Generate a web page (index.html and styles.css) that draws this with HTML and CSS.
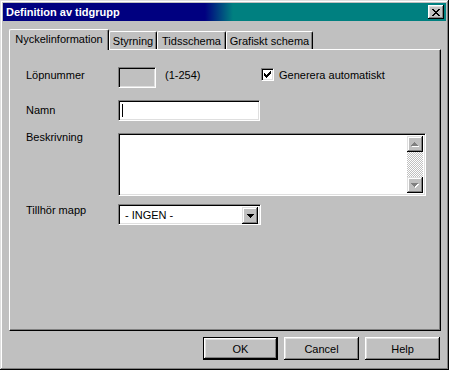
FILE: index.html
```html
<!DOCTYPE html>
<html lang="sv">
<head>
<meta charset="utf-8">
<title>Definition av tidgrupp</title>
<link rel="stylesheet" href="styles.css">
</head>
<body>
<div class="window">
  <div class="titlebar">
    <span class="title">Definition av tidgrupp</span>
    <button class="close" aria-label="Stäng">
      <svg width="8" height="7" viewBox="0 0 8 7" shape-rendering="crispEdges"><path d="M0 0h2v1h1v1h2V1h1V0h2v1h-1v1h-1v1h-1v1h1v1h1v1h1v1H6V6H5V5H3v1H2v1H0V6h1V5h1V4h1V3H2V2H1V1H0z" fill="#000"/></svg>
    </button>
  </div>
  <div class="client">
    <div class="tabs">
      <div class="tab active w1">Nyckelinformation</div>
      <div class="tab w2">Styrning</div>
      <div class="tab w3">Tidsschema</div>
      <div class="tab w4">Grafiskt schema</div>
    </div>
    <div class="panel">
      <div class="row r1">
        <span class="label">Löpnummer</span>
        <div class="field disabled f-num"></div>
        <span class="range">(1-254)</span>
        <span class="checkbox">
          <svg width="7" height="7" viewBox="0 0 7 7" shape-rendering="crispEdges"><path d="M6 0h1v1h-1z M5 1h2v1h-2z M0 2h1v1H0z M4 2h3v1H4z M0 3h2v1H0z M3 3h3v1H3z M0 4h5v1H0z M1 5h3v1H1z M2 6h1v1H2z" fill="#000"/></svg>
        </span>
        <span class="cblabel">Generera automatiskt</span>
      </div>
      <div class="row r2">
        <span class="label">Namn</span>
        <div class="field f-name"><span class="caret"></span></div>
      </div>
      <div class="row r3">
        <span class="label">Beskrivning</span>
        <div class="field f-desc">
          <div class="scrollbar">
            <div class="sbtn">
              <svg width="8" height="5" viewBox="0 0 8 5" shape-rendering="crispEdges"><path d="M4 1h1v1h1v1h1v1h1v1H1V4h1V3h1V2h1z" fill="#fff"/><path d="M3 0h1v1h1v1h1v1h1v1H0V3h1V2h1V1h1z" fill="#808080"/></svg>
            </div>
            <div class="track"></div>
            <div class="sbtn">
              <svg width="8" height="5" viewBox="0 0 8 5" shape-rendering="crispEdges"><path d="M1 1h7v1h-1v1h-1v1h-1v1H4V4H3V3H2V2H1z" fill="#fff"/><path d="M0 0h7v1h-1v1h-1v1h-1v1H3V3H2V2H1V1H0z" fill="#808080"/></svg>
            </div>
          </div>
        </div>
      </div>
      <div class="row r4">
        <span class="label">Tillhör mapp</span>
        <div class="field f-combo">
          <span class="combo-text">- INGEN -</span>
          <div class="dropbtn">
            <svg width="7" height="4" viewBox="0 0 7 4" shape-rendering="crispEdges"><path d="M0 0h7v1h-1v1h-1v1h-1v1H3V3H2V2H1V1H0z" fill="#000"/></svg>
          </div>
        </div>
      </div>
    </div>
    <div class="buttons">
      <button class="btn default">OK</button>
      <button class="btn">Cancel</button>
      <button class="btn">Help</button>
    </div>
  </div>
</div>
</body>
</html>
```

FILE: styles.css
```css
* { box-sizing: border-box; }

html, body {
  margin: 0;
  padding: 0;
  background: #c0c0c0;
}

body {
  font-family: "Liberation Sans", Arial, sans-serif;
  font-size: 11px;
  line-height: 13px;
  color: #000;
}

.window {
  width: 449px;
  height: 370px;
  padding: 3px;
  background: #c0c0c0;
  box-shadow: inset -1px -1px #000, inset 1px 1px #dfdfdf, inset -2px -2px #808080, inset 2px 2px #fff;
  display: flex;
  flex-direction: column;
}

.titlebar {
  height: 18px;
  flex: none;
  display: flex;
  align-items: center;
  justify-content: space-between;
  padding: 0 2px 0 3px;
  background: linear-gradient(to right, #000080 0, #000080 202px, #008080 230px, #008080 100%);
  color: #fff;
  font-weight: bold;
}

.close {
  width: 16px;
  height: 14px;
  padding: 0;
  margin: 0;
  border: 0;
  background: #c0c0c0;
  box-shadow: inset -1px -1px #000, inset 1px 1px #fff, inset -2px -2px #808080, inset 2px 2px #dfdfdf;
  display: flex;
  align-items: center;
  justify-content: center;
}

.client {
  flex: 1;
  display: flex;
  flex-direction: column;
  padding: 8px 5px 0 6px;
}

.tabs {
  height: 20px;
  display: flex;
  align-items: flex-end;
  position: relative;
  z-index: 1;
}

.tab {
  height: 18px;
  border-top: 1px solid #fff;
  border-left: 1px solid #fff;
  border-right: 1px solid #000;
  border-radius: 2px 2px 0 0;
  box-shadow: inset -1px 0 #808080;
  background: #c0c0c0;
  text-align: center;
  padding-top: 3px;
  white-space: nowrap;
}

.tab.active {
  height: 21px;
  margin-bottom: -1px;
  padding-top: 3px;
}

.w1 { width: 100px; }
.w2 { width: 48px; }
.w3 { width: 69px; }
.w4 { width: 87px; }

.panel {
  height: 282px;
  border-top: 1px solid #fff;
  border-left: 1px solid #fff;
  border-right: 1px solid #000;
  border-bottom: 1px solid #000;
  box-shadow: inset -1px -1px #808080;
  padding: 17px 0 0 16px;
}

.row {
  display: flex;
  align-items: flex-start;
}

.r2 { margin-top: 12px; }
.r3 { margin-top: 12px; }
.r4 { margin-top: 8px; }

.label {
  width: 92px;
  flex: none;
}

.r1 .label { padding-top: 2px; }
.r2 .label { padding-top: 4px; }
.r3 .label { margin-top: -2px; }
.r4 .label { padding-top: 0; }

.field {
  background: #fff;
  border-top: 1px solid #808080;
  border-left: 1px solid #808080;
  border-right: 1px solid #fff;
  border-bottom: 1px solid #fff;
  box-shadow: inset 1px 1px #000, inset -1px -1px #dfdfdf;
  height: 21px;
  flex: none;
}

.field.disabled { background: #c0c0c0; }

.f-num { width: 38px; }

.range {
  width: 105px;
  padding: 2px 0 0 9px;
  flex: none;
}

.checkbox {
  width: 13px;
  height: 13px;
  margin-top: 1px;
  background: #fff;
  border-top: 1px solid #808080;
  border-left: 1px solid #808080;
  border-right: 1px solid #fff;
  border-bottom: 1px solid #fff;
  box-shadow: inset 1px 1px #000, inset -1px -1px #dfdfdf;
  display: flex;
  align-items: center;
  justify-content: center;
  flex: none;
}

.cblabel {
  padding: 2px 0 0 5px;
}

.f-name {
  width: 142px;
  padding: 3px 0 0 3px;
}

.caret {
  display: block;
  width: 1px;
  height: 13px;
  background: #000;
}

.f-desc {
  width: 308px;
  height: 63px;
  padding: 2px;
  display: flex;
  justify-content: flex-end;
}

.scrollbar {
  width: 16px;
  display: flex;
  flex-direction: column;
}

.sbtn {
  height: 16px;
  flex: none;
  background: #c0c0c0;
  box-shadow: inset -1px -1px #000, inset 1px 1px #dfdfdf, inset -2px -2px #808080, inset 2px 2px #fff;
  display: flex;
  align-items: center;
  justify-content: center;
}

.track {
  flex: 1;
  background: repeating-conic-gradient(#fff 0 25%, #c0c0c0 0 50%) 0 0 / 2px 2px;
}

.f-combo {
  width: 143px;
  padding: 2px;
  display: flex;
}

.combo-text {
  flex: 1;
  padding: 2px 0 0 4px;
}

.dropbtn {
  width: 16px;
  height: 17px;
  background: #c0c0c0;
  box-shadow: inset -1px -1px #000, inset 1px 1px #dfdfdf, inset -2px -2px #808080, inset 2px 2px #fff;
  display: flex;
  align-items: center;
  justify-content: center;
}

.buttons {
  margin-top: 6px;
  display: flex;
  justify-content: flex-end;
  gap: 6px;
  padding-right: 1px;
}

.btn {
  width: 75px;
  height: 23px;
  margin: 0;
  padding: 0;
  border: 0;
  background: #c0c0c0;
  font-family: "Liberation Sans", Arial, sans-serif;
  font-size: 11px;
  color: #000;
  box-shadow: inset -1px -1px #000, inset 1px 1px #fff, inset -2px -2px #808080, inset 2px 2px #dfdfdf;
}

.btn.default {
  border: 1px solid #000;
  box-shadow: inset -1px -1px #000, inset 1px 1px #fff, inset -2px -2px #808080, inset 2px 2px #dfdfdf;
}
```
